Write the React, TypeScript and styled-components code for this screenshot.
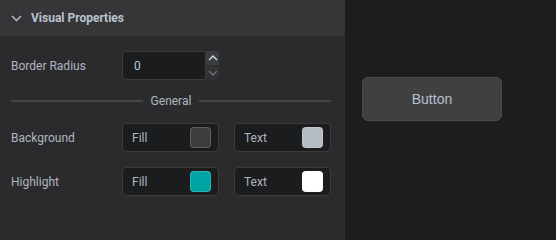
import React from "react";
import styled, { createGlobalStyle } from "styled-components";

const GlobalStyle = createGlobalStyle`
  html, body {
    margin: 0;
    padding: 0;
    background: #1c1d1f;
  }
  * {
    box-sizing: border-box;
  }
`;

interface ColorPairProps {
  label: string;
  fill: string;
  text: string;
}

function ChevronDown() {
  return (
    <svg width="11" height="7" viewBox="0 0 11 7" fill="none">
      <path d="M1 1l4.5 4.5L10 1" stroke="#b9c3cf" strokeWidth="1.4" />
    </svg>
  );
}

function SpinArrow({ up }: { up: boolean }) {
  return (
    <svg width="10" height="6" viewBox="0 0 10 6" fill="none">
      <path
        d={up ? "M1 5l4-4 4 4" : "M1 1l4 4 4-4"}
        stroke={up ? "#c9d4e0" : "#6a6d72"}
        strokeWidth="1.5"
      />
    </svg>
  );
}

function ColorPair(props: ColorPairProps) {
  const { label, fill, text } = props;
  return (
    <PropRow>
      <Label>{label}</Label>
      <SwatchBox>
        <span>Fill</span>
        <Swatch color={fill} />
      </SwatchBox>
      <SwatchBox>
        <span>Text</span>
        <Swatch color={text} />
      </SwatchBox>
    </PropRow>
  );
}

export default function App() {
  return (
    <>
      <GlobalStyle />
      <Page>
        <Panel>
          <SectionHeader>
            <ChevronDown />
            <HeaderTitle>Visual Properties</HeaderTitle>
          </SectionHeader>
          <SectionBody>
            <RadiusRow>
              <Label>Border Radius</Label>
              <NumberField>
                <NumberInput>0</NumberInput>
                <Spinner>
                  <SpinButton active>
                    <SpinArrow up />
                  </SpinButton>
                  <SpinButton>
                    <SpinArrow up={false} />
                  </SpinButton>
                </Spinner>
              </NumberField>
            </RadiusRow>
            <Divider>
              <DividerLine />
              <DividerText>General</DividerText>
              <DividerLine />
            </Divider>
            <ColorPair label="Background" fill="#3d3d3f" text="#b6bcc4" />
            <ColorPair label="Highlight" fill="#00a3a3" text="#ffffff" />
          </SectionBody>
        </Panel>
        <Preview>
          <PreviewButton>Button</PreviewButton>
        </Preview>
      </Page>
    </>
  );
}

const Page = styled.div`
  display: flex;
  min-height: 202px;
  height: 100vh;
  width: 100%;
  overflow: hidden;
  font-family: Roboto, "Liberation Sans", sans-serif;
`;

const Panel = styled.div`
  width: 345px;
  flex-shrink: 0;
  background: #2b2b2d;
  display: flex;
  flex-direction: column;
`;

const SectionHeader = styled.div`
  height: 36px;
  flex-shrink: 0;
  background: #363638;
  display: flex;
  align-items: center;
  gap: 9px;
  padding: 0 11px;
`;

const HeaderTitle = styled.div`
  font-size: 12px;
  font-weight: 700;
  color: #b9c3cf;
`;

const SectionBody = styled.div`
  display: flex;
  flex-direction: column;
  padding: 15px 14px 0 11px;
`;

const Label = styled.div`
  width: 111px;
  flex-shrink: 0;
  font-size: 12px;
  color: #aeb6c1;
`;

const RadiusRow = styled.div`
  display: flex;
  align-items: center;
`;

const NumberField = styled.div`
  display: flex;
  height: 29px;
`;

const NumberInput = styled.div`
  width: 84px;
  height: 29px;
  background: #1b1c1e;
  border: 1px solid #3b3b3e;
  border-radius: 4px 0 0 4px;
  display: flex;
  align-items: center;
  padding-left: 11px;
  font-size: 12px;
  color: #bfcad6;
`;

const Spinner = styled.div`
  width: 13px;
  display: flex;
  flex-direction: column;
  gap: 1px;
`;

const SpinButton = styled.div<{ active?: boolean }>`
  flex: 1;
  display: flex;
  align-items: center;
  justify-content: center;
  background: ${(p) => (p.active ? "#3c3d40" : "#323235")};
  border-radius: ${(p) => (p.active ? "3px 3px 0 0" : "0 0 3px 3px")};
`;

const Divider = styled.div`
  display: flex;
  align-items: center;
  gap: 7px;
  margin-top: 13px;
  height: 16px;
`;

const DividerLine = styled.div`
  flex: 1;
  height: 2px;
  background: #454548;
`;

const DividerText = styled.div`
  font-size: 12px;
  color: #aeb6c1;
  padding: 0 1px;
`;

const PropRow = styled.div`
  display: flex;
  align-items: center;
  margin-top: 14px;

  & + & {
    margin-top: 15px;
  }
`;

const SwatchBox = styled.div`
  width: 97px;
  height: 29px;
  display: flex;
  align-items: center;
  justify-content: space-between;
  padding: 0 7px 0 9px;
  background: #1b1c1e;
  border: 1px solid #3b3b3e;
  border-radius: 4px;
  font-size: 12px;
  color: #aeb6c1;

  & + & {
    margin-left: 15px;
  }
`;

const Swatch = styled.div<{ color: string }>`
  width: 21px;
  height: 21px;
  border-radius: 4px;
  background: ${(p) => p.color};
  border: 1px solid rgba(255, 255, 255, 0.18);
`;

const Preview = styled.div`
  flex: 1;
  background: #1c1d1f;
  padding: 77px 0 0 17px;
`;

const PreviewButton = styled.div`
  width: 140px;
  height: 44px;
  display: flex;
  align-items: center;
  justify-content: center;
  background: #404040;
  border: 1px solid #4c4c4e;
  border-radius: 6px;
  font-family: "Liberation Sans", Arial, sans-serif;
  font-size: 14px;
  color: #b5c1d0;
`;
